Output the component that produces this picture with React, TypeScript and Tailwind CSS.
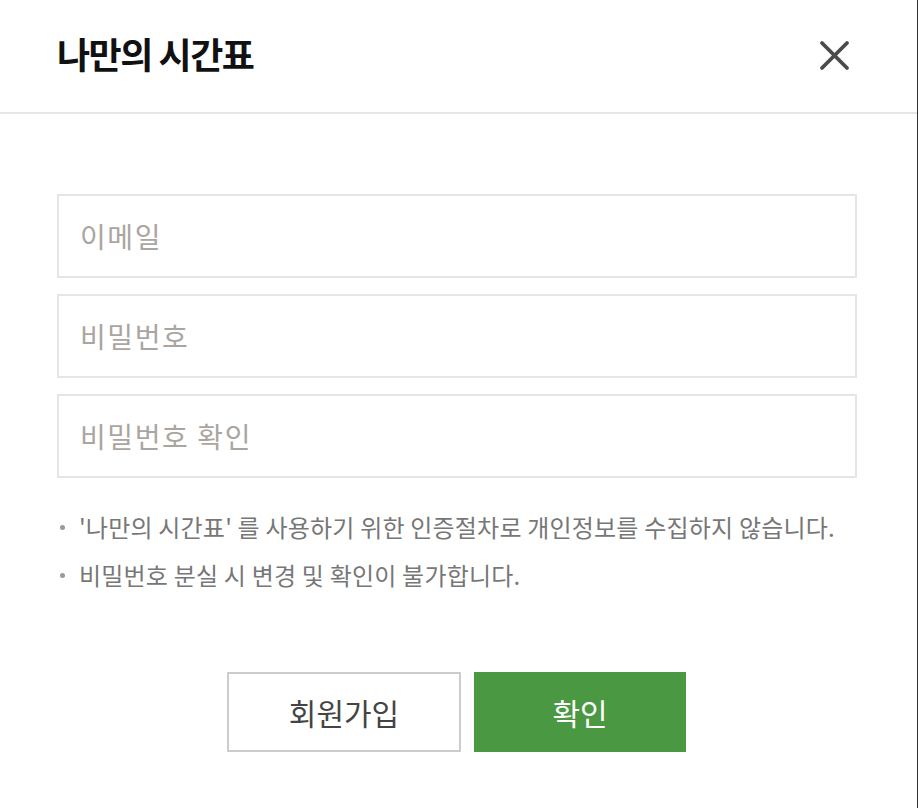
const notes = [
  "'나만의 시간표' 를 사용하기 위한 인증절차로 개인정보를 수집하지 않습니다.",
  "비밀번호 분실 시 변경 및 확인이 불가합니다.",
];

const fields = [
  { name: "email", type: "email", placeholder: "이메일" },
  { name: "password", type: "password", placeholder: "비밀번호" },
  { name: "passwordConfirm", type: "password", placeholder: "비밀번호 확인" },
];

export default function App() {
  return (
    <div
      className="w-[918px] h-[808px] bg-white border-r border-[#333] flex flex-col"
      style={{ fontFamily: '"Noto Sans CJK KR", "Noto Sans", sans-serif' }}
    >
      {/* Header */}
      <div className="h-[114px] shrink-0 flex items-center justify-between pl-[57px] pr-[67px] border-b-2 border-[#e5e5e5]">
        <h1 className="text-[36px] font-bold text-[#111] tracking-[-1.5px] leading-none -mt-[6px]">나만의 시간표</h1>
        <button className="text-[#4a4a4a] -mt-[2px]">
          <svg width="31" height="31" viewBox="0 0 31 31" fill="none" stroke="currentColor" strokeWidth="3.8" strokeLinecap="round">
            <path d="M3 3 L28 28 M28 3 L3 28" />
          </svg>
        </button>
      </div>

      {/* Form */}
      <div className="pl-[57px] pt-[80px] flex flex-col">
        <div className="flex flex-col gap-4">
          {fields.map((f) => (
            <input
              key={f.name}
              type={f.type}
              placeholder={f.placeholder}
              className="w-[800px] h-[84px] border-2 border-[#e5e5e5] px-[21px] text-[28px] tracking-[1.6px] text-[#333] placeholder:text-[#aaa5a0] outline-none"
            />
          ))}
        </div>

        <ul className="mt-[25px] flex flex-col">
          {notes.map((n) => (
            <li key={n} className="flex items-center h-[48px] text-[24px] text-[#777] tracking-[0.2px]">
              <span className="w-[5px] h-[5px] rounded-full bg-[#999] ml-[3px] mr-[14px] shrink-0" />
              {n}
            </li>
          ))}
        </ul>
      </div>

      {/* Buttons */}
      <div className="mt-[73px] flex justify-center gap-[13px] pr-[4px]">
        <button className="w-[234px] h-[80px] border-2 border-[#cccccc] bg-white text-[30px] text-[#444]">
          회원가입
        </button>
        <button className="w-[212px] h-[80px] bg-[#4a9841] text-[30px] text-white">
          확인
        </button>
      </div>
    </div>
  );
}
